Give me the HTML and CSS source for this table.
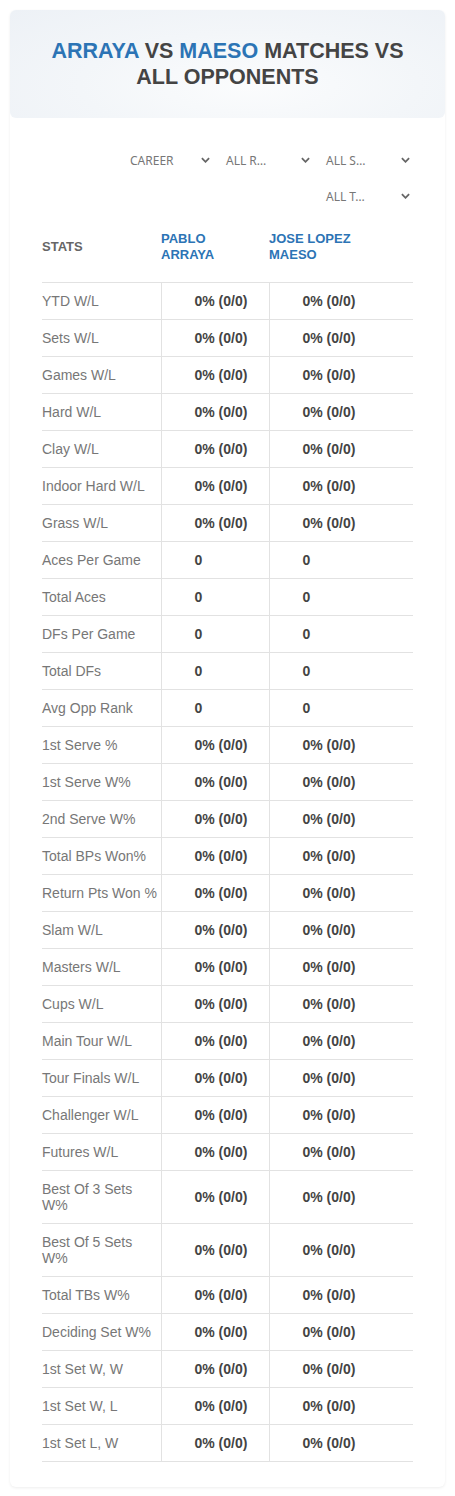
FILE: index.html
```html
<!DOCTYPE html>
<html lang="en">
<head>
  <meta charset="UTF-8" />
  <meta name="viewport" content="width=device-width, initial-scale=1.0"/>
  <title>Arraya vs Maeso</title>
  <link rel="stylesheet" href="styles.css">
</head>
<body>
  <div class="card">
    <div class="card-head">
      <h1><span class="blue">ARRAYA</span> VS <span class="blue">MAESO</span> MATCHES VS ALL OPPONENTS</h1>
    </div>

    <div class="filters">
      <div class="pick first">CAREER <svg viewBox="0 0 10 6"><path d="M1 1l4 4 4-4"/></svg></div>
      <div class="pick">ALL R… <svg viewBox="0 0 10 6"><path d="M1 1l4 4 4-4"/></svg></div>
      <div class="pick">ALL S… <svg viewBox="0 0 10 6"><path d="M1 1l4 4 4-4"/></svg></div>
      <div class="pick">ALL T… <svg viewBox="0 0 10 6"><path d="M1 1l4 4 4-4"/></svg></div>
    </div>

    <table class="stats">
      <thead>
        <tr>
          <th class="lbl">STATS</th>
          <th class="name">PABLO<br>ARRAYA</th>
          <th class="name">JOSE LOPEZ<br>MAESO</th>
        </tr>
      </thead>
      <tbody id="rows"></tbody>
    </table>
  </div>

  <script>
    // label, value type (p = percent, n = number)
    const rows = [
      ["YTD W/L", "p"], ["Sets W/L", "p"], ["Games W/L", "p"], ["Hard W/L", "p"],
      ["Clay W/L", "p"], ["Indoor Hard W/L", "p"], ["Grass W/L", "p"],
      ["Aces Per Game", "n"], ["Total Aces", "n"], ["DFs Per Game", "n"],
      ["Total DFs", "n"], ["Avg Opp Rank", "n"],
      ["1st Serve %", "p"], ["1st Serve W%", "p"], ["2nd Serve W%", "p"],
      ["Total BPs Won%", "p"], ["Return Pts Won %", "p"], ["Slam W/L", "p"],
      ["Masters W/L", "p"], ["Cups W/L", "p"], ["Main Tour W/L", "p"],
      ["Tour Finals W/L", "p"], ["Challenger W/L", "p"], ["Futures W/L", "p"],
      ["Best Of 3 Sets W%", "p"], ["Best Of 5 Sets W%", "p"], ["Total TBs W%", "p"],
      ["Deciding Set W%", "p"], ["1st Set W, W", "p"], ["1st Set W, L", "p"],
      ["1st Set L, W", "p"]
    ];

    const body = document.getElementById("rows");
    rows.forEach(([label, type]) => {
      const v = type === "p" ? "0% (0/0)" : "0";
      const tr = document.createElement("tr");
      tr.innerHTML = `<td class="lbl">${label}</td><td class="val">${v}</td><td class="val">${v}</td>`;
      body.appendChild(tr);
    });
  </script>
</body>
</html>
```

FILE: styles.css
```css
body {
  margin: 0;
  padding: 0;
  background: #fff;
  font-family: 'Liberation Sans', Arial, sans-serif;
}

.card {
  margin: 10px;
  background: #fff;
  border-radius: 6px;
  box-shadow: 0 1px 3px rgba(0, 0, 0, 0.07);
  padding-bottom: 25px;
}

.card-head {
  border-radius: 6px;
  background: radial-gradient(ellipse at 55% 70%, #fbfcfd 0%, #f3f6f9 50%, #edf1f6 100%);
  padding: 28px 28px 28px;
  text-align: center;
}

.card-head h1 {
  margin: 0;
  font-size: 21.5px;
  line-height: 26px;
  font-weight: bold;
  color: #444;
}

.blue {
  color: #2c74b5;
}

.filters {
  display: flex;
  flex-wrap: wrap;
  justify-content: flex-end;
  gap: 4px 5px;
  margin: 26px 31px 0 32px;
}

.pick {
  width: 95px;
  height: 32px;
  box-sizing: border-box;
  padding: 0 4px 0 7px;
  display: flex;
  align-items: center;
  justify-content: space-between;
  font-family: 'Noto Sans', sans-serif;
  font-size: 12px;
  color: #777;
}

.pick.first {
  padding-left: 11px;
}

.pick svg {
  width: 9px;
  height: 6px;
  fill: none;
  stroke: #666;
  stroke-width: 2;
}

.stats {
  width: 371px;
  margin: 10px 0 0 32px;
  border-collapse: collapse;
  table-layout: fixed;
}

.stats th {
  text-align: left;
  font-size: 13px;
  line-height: 16px;
  font-weight: bold;
  padding: 9px 0 19px;
  border-bottom: 1px solid #e2e2e2;
}

.stats th.lbl {
  width: 119px;
  color: #666;
}

.stats th.name {
  color: #2c74b5;
  vertical-align: middle;
}

.stats th.name:nth-child(2) {
  width: 108px;
}

.stats td {
  font-size: 14px;
  line-height: 16px;
  padding: 10px 0;
  border-bottom: 1px solid #e2e2e2;
  vertical-align: middle;
}

.stats td.lbl {
  color: #777;
}

.stats td.val {
  border-left: 1px solid #e2e2e2;
  padding-left: 33px;
  font-weight: bold;
  color: #444;
}
```
